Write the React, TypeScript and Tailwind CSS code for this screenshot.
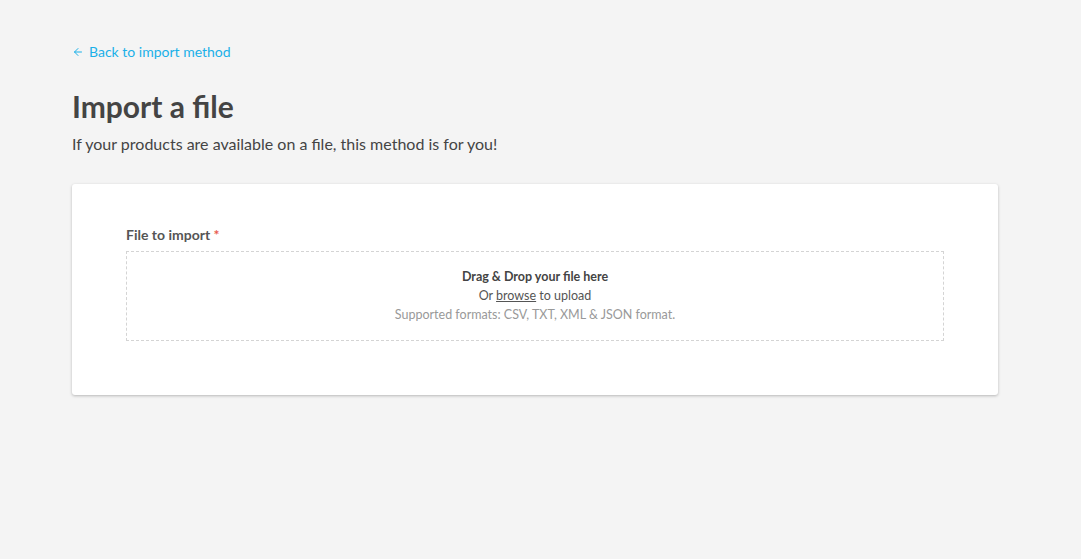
import { ArrowLeft } from "lucide-react";

export default function App() {
  return (
    <div
      className="min-h-[559px] bg-[#f4f4f4] text-[#444]"
      style={{ fontFamily: "Lato, 'Open Sans', sans-serif" }}
    >
      <div className="w-[926px] ml-[72px] pt-[42px]">
        <a href="#" className="flex items-center gap-[5px] text-[14px] leading-[20px] text-[#1ab0e8]">
          <ArrowLeft className="w-[12px] h-[12px]" strokeWidth={2} />
          <span>Back to import method</span>
        </a>

        <h1 className="mt-[26px] text-[30px] leading-[36px] font-bold text-[#444]">Import a file</h1>
        <p className="mt-[9px] text-[16px] leading-[22px] text-[#444]">
          If your products are available on a file, this method is for you!
        </p>

        <div className="mt-[29px] bg-white rounded-[3px] shadow-[0_1px_3px_rgba(0,0,0,0.25)] px-[54px] pt-[42px] pb-[54px]">
          <label className="block text-[14px] leading-[18px] font-bold text-[#555]">
            File to import <span className="text-[#e85a4f]">*</span>
          </label>
          <div className="mt-[7px] h-[90px] pb-[2px] border border-dashed border-[#d4d4d4] flex flex-col items-center justify-center text-[12.5px] leading-[19px]">
            <div className="font-bold text-[#444]">Drag &amp; Drop your file here</div>
            <div className="text-[#555]">
              Or <span className="underline">browse</span> to upload
            </div>
            <div className="text-[#999]">Supported formats: CSV, TXT, XML &amp; JSON format.</div>
          </div>
        </div>
      </div>
    </div>
  );
}
